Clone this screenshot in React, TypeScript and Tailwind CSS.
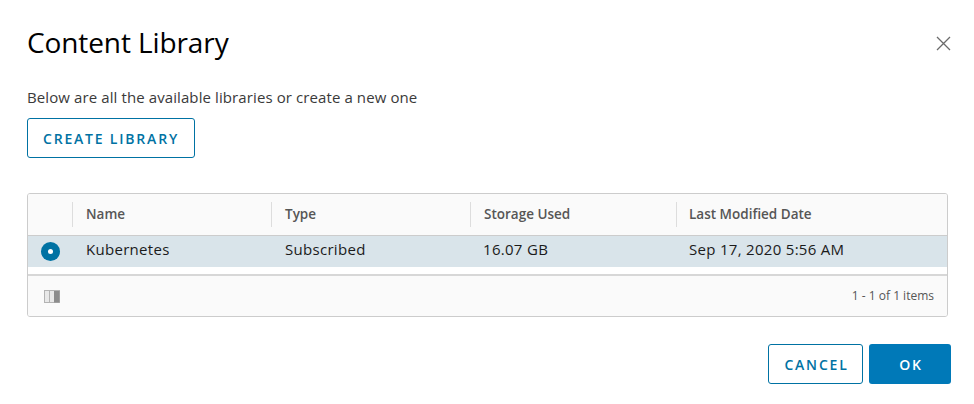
import React from "react";

function ColumnIcon() {
  return (
    <svg width="16" height="13" viewBox="0 0 16 13">
      <rect x="0.5" y="0.5" width="15" height="12" fill="#e8e8e8" stroke="#b3b3b3" />
      <rect x="5" y="1" width="1" height="11" fill="#b3b3b3" />
      <rect x="10" y="1" width="5.5" height="11.5" fill="#8c8c8c" />
    </svg>
  );
}

export default function App() {
  const font = { fontFamily: '"Open Sans", "Liberation Sans", sans-serif' };
  return (
    <div className="w-[974px] h-[404px] bg-white flex flex-col pl-[27px] pr-[23px]" style={font}>
      <div className="flex justify-between items-start pt-[24px] h-[80px]">
        <div className="text-[28px] leading-[36px] text-black tracking-[-0.1px]">Content Library</div>
        <button className="mt-[12px] w-[15px] h-[15px]" aria-label="close">
          <svg width="15" height="15" viewBox="0 0 15 15">
            <path d="M1 1 L14 14 M14 1 L1 14" stroke="#6b6b6b" strokeWidth="1.3" />
          </svg>
        </button>
      </div>
      <div className="text-[15px] leading-[20px] text-[#3a3a3a] mt-[7px] tracking-[0.1px]">
        Below are all the available libraries or create a new one
      </div>
      <div className="mt-[11px]">
        <button className="h-[40px] w-[168px] border border-[#0072a3] rounded-[3px] text-[#0072a3] text-[14px] font-semibold tracking-[1.8px]">
          CREATE LIBRARY
        </button>
      </div>
      <div className="mt-[35px] w-[921px] border border-[#cccccc] rounded-[3px] overflow-hidden">
        <div className="flex h-[42px] bg-[#fafafa] border-b border-[#cccccc] text-[13.5px] font-semibold text-[#565656]">
          <div className="w-[44px]" />
          <div className="w-[199px] flex items-center pl-[13px] border-l border-[#dddddd] my-[8px]">Name</div>
          <div className="w-[199px] flex items-center pl-[13px] border-l border-[#dddddd] my-[8px]">Type</div>
          <div className="w-[206px] flex items-center pl-[13px] border-l border-[#dddddd] my-[8px]">Storage Used</div>
          <div className="flex-1 flex items-center pl-[12px] border-l border-[#dddddd] my-[8px]">Last Modified Date</div>
        </div>
        <div className="flex h-[31px] bg-[#d9e4ea] text-[15px] leading-[20px] text-[#1b1b1b] items-center tracking-[0.3px]">
          <div className="w-[44px] flex justify-center pl-[1px]">
            <div className="w-[19px] h-[19px] rounded-full bg-[#0072a3] flex items-center justify-center">
              <div className="w-[5px] h-[5px] rounded-full bg-white" />
            </div>
          </div>
          <div className="w-[199px] pl-[14px] mb-[5px]">Kubernetes</div>
          <div className="w-[199px] pl-[14px] mb-[5px]">Subscribed</div>
          <div className="w-[206px] pl-[13px] mb-[5px]">16.07 GB</div>
          <div className="flex-1 pl-[13px] mb-[5px]">Sep 17, 2020 5:56 AM</div>
        </div>
        <div className="h-[9px] bg-white border-b-2 border-[#d7d7d7]" />
        <div className="h-[40px] bg-[#fafafa] flex items-center justify-between pl-[16px] pr-[13px]">
          <ColumnIcon />
          <div className="text-[12px] text-[#565656]">1 - 1 of 1 items</div>
        </div>
      </div>
      <div className="flex justify-end gap-[6px] mt-[27px]">
        <button className="h-[40px] w-[95px] border border-[#0072a3] rounded-[3px] text-[#0072a3] text-[14px] font-semibold tracking-[1.8px] pl-[2px]">
          CANCEL
        </button>
        <button className="h-[40px] w-[82px] bg-[#0079b8] rounded-[3px] text-white text-[14px] font-semibold tracking-[1.8px] pl-[2px]">
          OK
        </button>
      </div>
    </div>
  );
}
